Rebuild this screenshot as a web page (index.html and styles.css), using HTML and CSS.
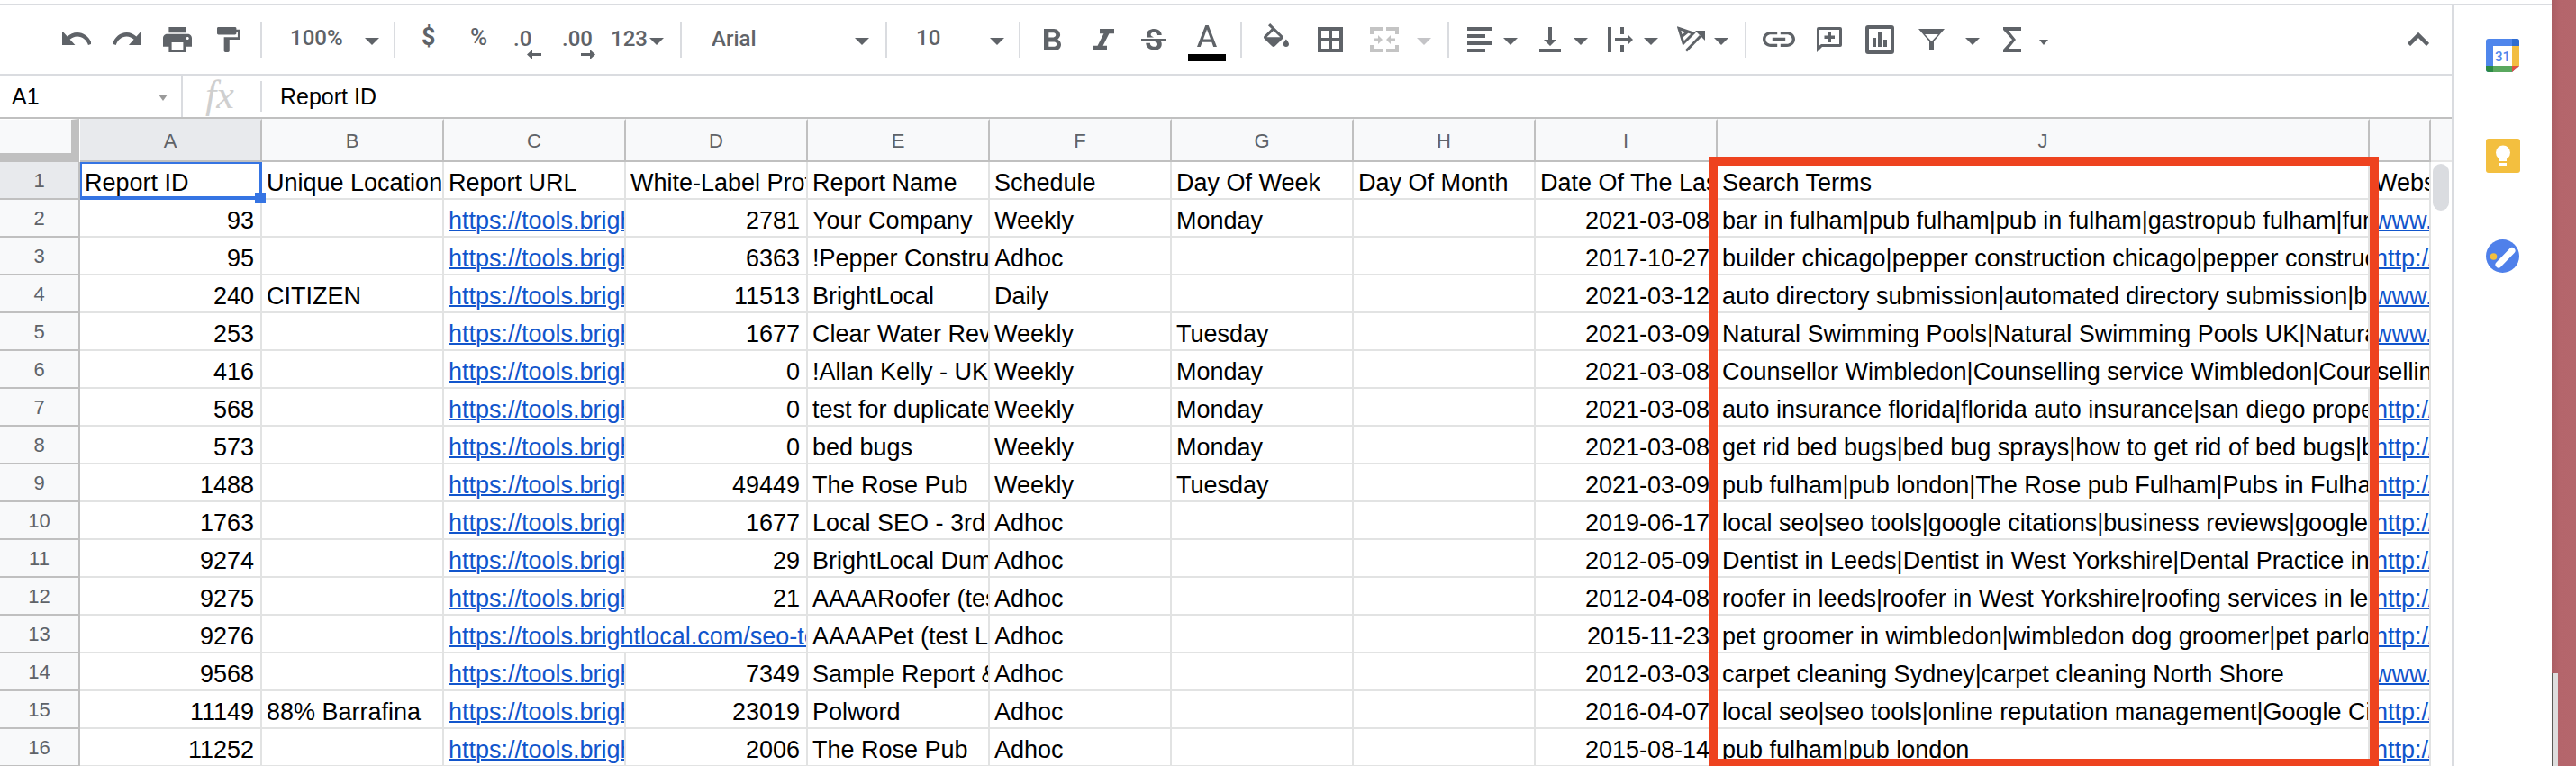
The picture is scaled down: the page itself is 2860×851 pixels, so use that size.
FILE: index.html
```html
<!DOCTYPE html>
<html lang="en">
<head>
<meta charset="utf-8">
<title>Report sheet</title>
<link rel="stylesheet" href="styles.css">
</head>
<body>
<div class="app">
  <div class="topline"></div>
  <div class="work">
    <main class="sheet">
      <div class="toolbar">
        <div class="group g1">
          <svg class="ico undo" viewBox="2 8 20 8" preserveAspectRatio="none"><path d="M12.5 8c-2.65 0-5.05.99-6.9 2.6L2 7v9h9l-3.62-3.62c1.39-1.16 3.16-1.88 5.12-1.88 3.54 0 6.55 2.31 7.6 5.5l2.37-.78C21.08 11.03 17.15 8 12.5 8z"/></svg>
          <svg class="ico redo" viewBox="1.5 8 20.5 8" preserveAspectRatio="none"><path d="M18.4 10.6C16.55 8.99 14.15 8 11.5 8c-4.65 0-8.58 3.03-9.96 7.22L3.9 16c1.05-3.19 4.05-5.5 7.6-5.5 1.95 0 3.73.72 5.12 1.88L13 16h9V7l-3.6 3.6z"/></svg>
          <svg class="ico print" viewBox="2 3 20 18" preserveAspectRatio="none"><path d="M19 8H5c-1.66 0-3 1.34-3 3v6h4v4h12v-4h4v-6c0-1.66-1.34-3-3-3zm-3 11H8v-5h8v5zm3-7c-.55 0-1-.45-1-1s.45-1 1-1 1 .45 1 1-.45 1-1 1zm-1-9H6v4h12V3z"/></svg>
          <svg class="ico paint" viewBox="4 2 17 20" preserveAspectRatio="none"><path d="M18 4V3c0-.55-.45-1-1-1H5c-.55 0-1 .45-1 1v4c0 .55.45 1 1 1h12c.55 0 1-.45 1-1V6h1v4H9v11c0 .55.45 1 1 1h2c.55 0 1-.45 1-1v-9h8V4h-3z"/></svg>
          <span class="sep"></span>
        </div>
        <div class="group g2">
          <span class="txt zoom-t">100%</span><span class="caret"></span>
          <span class="sep"></span>
        </div>
        <div class="group g3">
          <span class="txt dollar">$</span>
          <span class="txt pct">%</span>
          <span class="txt dec dec-less">.0<svg class="arrow" viewBox="0 0 16 11"><path d="M16 4H6V0L0 5.500 6 11V7h10z"/></svg></span>
          <span class="txt dec dec-more">.00<svg class="arrow" viewBox="0 0 16 11"><path d="M0 4h10V0l6 5.500L10 11V7H0z"/></svg></span>
          <span class="txt fmt">123</span><span class="caret fmt-caret"></span>
          <span class="sep"></span>
        </div>
        <div class="group g4">
          <span class="txt font-t">Arial</span><span class="caret"></span>
          <span class="sep"></span>
        </div>
        <div class="group g5">
          <span class="txt size-t">10</span><span class="caret"></span>
          <span class="sep"></span>
        </div>
        <div class="group g6">
          <svg class="ico bold" viewBox="7 4 10.750 14" preserveAspectRatio="none"><path d="M15.600 10.790c.97-.67 1.650-1.770 1.650-2.790 0-2.260-1.750-4-4-4H7v14h7.040c2.090 0 3.710-1.700 3.710-3.790 0-1.520-.86-2.820-2.150-3.420zM10 6.500h3c.83 0 1.500.67 1.500 1.500s-.67 1.500-1.500 1.500h-3v-3zm3.500 9H10v-3h3.500c.83 0 1.500.67 1.500 1.500s-.67 1.500-1.500 1.500z"/></svg>
          <svg class="ico italic" viewBox="6 4 12 14" preserveAspectRatio="none"><path d="M10 4v3h2.210l-3.420 8H6v3h8v-3h-2.210l3.420-8H18V4z"/></svg>
          <svg class="ico strike" viewBox="3 3 18 16" preserveAspectRatio="none"><path d="M6.850 7.080C6.850 4.370 9.450 3 12.240 3c1.640 0 3 .49 3.900 1.280.77.65 1.460 1.730 1.460 3.240h-3.010c0-.31-.05-.59-.15-.85-.29-.86-1.200-1.280-2.250-1.280-1.860 0-2.340 1.020-2.340 1.700 0 .48.25.88.74 1.210.38.25.77.48 1.410.7H7.390c-.21-.34-.54-.89-.54-1.920zM21 12v-2H3v2h9.620c1.150.45 1.960.75 1.960 1.970 0 1-.81 1.670-2.280 1.670-1.540 0-2.930-.54-2.930-2.510H6.400c0 .55.08 1.130.24 1.580.81 2.290 3.290 3.300 5.670 3.300 2.270 0 5.300-.89 5.300-4.050 0-.3-.01-1.160-.48-1.960H21z"/></svg>
          <div class="color-a">
            <svg class="ico color-glyph" viewBox="5.500 3 13 14" preserveAspectRatio="none"><path d="M11 3L5.500 17h2.250l1.120-3h6.250l1.120 3h2.250L13 3h-2zm-1.380 9L12 5.670 14.380 12H9.620z"/></svg>
            <span class="color-bar"></span>
          </div>
          <span class="sep"></span>
        </div>
        <div class="group g7">
          <svg class="ico fill" viewBox="3 0 18 17" preserveAspectRatio="none"><path d="M16.560 8.940L7.620 0 6.210 1.410l2.380 2.380-5.150 5.150c-.59.59-.59 1.540 0 2.120l5.500 5.500c.29.29.68.44 1.060.44s.77-.15 1.060-.44l5.500-5.500c.59-.58.59-1.530 0-2.120zM5.210 10L10 5.210 14.790 10H5.210zM19 11.500s-2 2.170-2 3.500c0 1.100.9 2 2 2s2-.9 2-2c0-1.330-2-3.500-2-3.500z"/></svg>
          <svg class="ico borders" viewBox="0 0 28 28"><path fill-rule="evenodd" d="M0 0h28v28H0z M4 4v8h8V4z M16 4v8h8V4z M4 16v8h8v-8z M16 16v8h8v-8z"/></svg>
          <svg class="ico merge off" viewBox="0 0 32 28"><path d="M0 0h14v4H4v4H0z M18 0h14v8h-4V4H18z M0 20h4v4h10v4H0z M28 20h4v8H18v-4h10z M4 12.500h5V9l5 5-5 5v-3.500H4z M28 12.500h-5V9l-5 5 5 5v-3.500h5z"/></svg>
          <span class="caret off merge-caret"></span>
          <span class="sep"></span>
        </div>
        <div class="group g8">
          <svg class="ico align" viewBox="0 0 28 28"><path d="M0 0h28v4H0z M0 8h20v4H0z M0 16h28v4H0z M0 24h20v4H0z"/></svg>
          <span class="caret c-a"></span>
          <svg class="ico valign" viewBox="0 0 24 28"><path d="M0 24h24v4H0z M10 0h4v14h5l-7 7-7-7h5z"/></svg>
          <span class="caret c-b"></span>
          <svg class="ico wrap" viewBox="0 0 28 28"><path d="M0 0h4v28H0z M14 0h4v8h-4z M14 20h4v8h-4z M8 12h14V8l6 6-6 6v-4H8z"/></svg>
          <span class="caret c-a"></span>
          <svg class="ico rotate" viewBox="0 0 31 29"><path class="line" d="M2 2.500 18 8 7 19z M4.500 12 12 6"/><path class="line" d="M10 27.500 26 11"/><path d="M20 5h11v11z"/></svg>
          <span class="caret c-d"></span>
          <span class="sep"></span>
        </div>
        <div class="group g9">
          <svg class="ico link" viewBox="2 7 20 10" preserveAspectRatio="none"><path d="M3.900 12c0-1.710 1.390-3.100 3.100-3.100h4V7H7c-2.760 0-5 2.240-5 5s2.240 5 5 5h4v-1.900H7c-1.710 0-3.100-1.390-3.100-3.100zM8 13h8v-2H8v2zm9-6h-4v1.900h4c1.710 0 3.100 1.390 3.100 3.100s-1.390 3.100-3.100 3.100h-4V17h4c2.760 0 5-2.240 5-5s-2.240-5-5-5z"/></svg>
          <svg class="ico comment" viewBox="0 0 28 28"><path fill-rule="evenodd" d="M2 0h24a2 2 0 0 1 2 2v18a2 2 0 0 1-2 2H6l-6 6V2a2 2 0 0 1 2-2z M3 3v17.500L5 19h20V3z M12.500 5.500h3.500v4h4v3.500h-4v4h-3.500v-4h-4V9.500h4z"/></svg>
          <svg class="ico chart" viewBox="0 0 32 32"><path fill-rule="evenodd" d="M3 0h26a3 3 0 0 1 3 3v26a3 3 0 0 1-3 3H3a3 3 0 0 1-3-3V3a3 3 0 0 1 3-3z M4 4v24h24V4z"/><path d="M8 14h4v10H8z M14 8h4v16h-4z M20 16h4v8h-4z"/></svg>
          <svg class="ico filter" viewBox="0 0 29 24"><path fill-rule="evenodd" d="M0 0h29L17 14v10h-5V14z M7 6l7.500 8L22 6z"/></svg>
          <span class="caret c-f"></span>
          <svg class="ico sigma" viewBox="0 0 20 28"><path d="M20 0H0v3l10 11L0 25v3h20v-4H6l8-10L6 4h14z"/></svg>
          <span class="caret small"></span>
          <svg class="ico collapse" viewBox="0 0 24 15"><path class="line thick" d="M1.500 13.500 12 3l10.500 10.500"/></svg>
        </div>
      </div>

      <div class="formula">
        <div class="namebox"><span class="name-t">A1</span><span class="caret name-caret"></span></div>
        <div class="fx">fx</div>
        <div class="formula-t">Report ID</div>
      </div>

      <div class="table-area">
        <div class="grid">
          <div class="corner"></div>
          <div class="ch on">A</div><div class="ch">B</div><div class="ch">C</div><div class="ch">D</div><div class="ch">E</div><div class="ch">F</div><div class="ch">G</div><div class="ch">H</div><div class="ch">I</div><div class="ch">J</div><div class="ch"></div>

          <div class="rh on">1</div>
          <div class="c sel">Report ID<span class="handle"></span></div><div class="c">Unique Location Name</div><div class="c">Report URL</div><div class="c">White-Label Profile ID</div><div class="c">Report Name</div><div class="c">Schedule</div><div class="c">Day Of Week</div><div class="c">Day Of Month</div><div class="c">Date Of The Last Run</div><div class="c">Search Terms</div><div class="c">Website URL</div>

          <div class="rh">2</div>
          <div class="c n">93</div><div class="c"></div><div class="c"><a class="lnk" href="#">https://tools.brightlocal.com/seo-tools</a></div><div class="c n">2781</div><div class="c">Your Company</div><div class="c">Weekly</div><div class="c">Monday</div><div class="c"></div><div class="c n">2021-03-08</div><div class="c">bar in fulham|pub fulham|pub in fulham|gastropub fulham|fun pubs in fulham</div><div class="c"><a class="lnk" href="#">www.therosepub.co.uk</a></div>

          <div class="rh">3</div>
          <div class="c n">95</div><div class="c"></div><div class="c"><a class="lnk" href="#">https://tools.brightlocal.com/seo-tools</a></div><div class="c n">6363</div><div class="c">!Pepper Construction</div><div class="c">Adhoc</div><div class="c"></div><div class="c"></div><div class="c n">2017-10-27</div><div class="c">builder chicago|pepper construction chicago|pepper construction company</div><div class="c"><a class="lnk" href="#">http://www.pepperconstruction.com</a></div>

          <div class="rh">4</div>
          <div class="c n">240</div><div class="c">CITIZEN</div><div class="c"><a class="lnk" href="#">https://tools.brightlocal.com/seo-tools</a></div><div class="c n">11513</div><div class="c">BrightLocal</div><div class="c">Daily</div><div class="c"></div><div class="c"></div><div class="c n">2021-03-12</div><div class="c">auto directory submission|automated directory submission|best directories</div><div class="c"><a class="lnk" href="#">www.brightlocal.com</a></div>

          <div class="rh">5</div>
          <div class="c n">253</div><div class="c"></div><div class="c"><a class="lnk" href="#">https://tools.brightlocal.com/seo-tools</a></div><div class="c n">1677</div><div class="c">Clear Water Revolution</div><div class="c">Weekly</div><div class="c">Tuesday</div><div class="c"></div><div class="c n">2021-03-09</div><div class="c">Natural Swimming Pools|Natural Swimming Pools UK|Natural Pools</div><div class="c"><a class="lnk" href="#">www.clearwaterrevolution.com</a></div>

          <div class="rh">6</div>
          <div class="c n">416</div><div class="c"></div><div class="c"><a class="lnk" href="#">https://tools.brightlocal.com/seo-tools</a></div><div class="c n">0</div><div class="c">!Allan Kelly - UK</div><div class="c">Weekly</div><div class="c">Monday</div><div class="c"></div><div class="c n">2021-03-08</div><div class="c span2">Counsellor Wimbledon|Counselling service Wimbledon|Counselling</div>

          <div class="rh">7</div>
          <div class="c n">568</div><div class="c"></div><div class="c"><a class="lnk" href="#">https://tools.brightlocal.com/seo-tools</a></div><div class="c n">0</div><div class="c">test for duplicate</div><div class="c">Weekly</div><div class="c">Monday</div><div class="c"></div><div class="c n">2021-03-08</div><div class="c">auto insurance florida|florida auto insurance|san diego property insurance</div><div class="c"><a class="lnk" href="#">http://www.example.com</a></div>

          <div class="rh">8</div>
          <div class="c n">573</div><div class="c"></div><div class="c"><a class="lnk" href="#">https://tools.brightlocal.com/seo-tools</a></div><div class="c n">0</div><div class="c">bed bugs</div><div class="c">Weekly</div><div class="c">Monday</div><div class="c"></div><div class="c n">2021-03-08</div><div class="c">get rid bed bugs|bed bug sprays|how to get rid of bed bugs|bed bug bites</div><div class="c"><a class="lnk" href="#">http://www.bedbugs.com</a></div>

          <div class="rh">9</div>
          <div class="c n">1488</div><div class="c"></div><div class="c"><a class="lnk" href="#">https://tools.brightlocal.com/seo-tools</a></div><div class="c n">49449</div><div class="c">The Rose Pub</div><div class="c">Weekly</div><div class="c">Tuesday</div><div class="c"></div><div class="c n">2021-03-09</div><div class="c">pub fulham|pub london|The Rose pub Fulham|Pubs in Fulham</div><div class="c"><a class="lnk" href="#">http://www.therosepub.co.uk</a></div>

          <div class="rh">10</div>
          <div class="c n">1763</div><div class="c"></div><div class="c"><a class="lnk" href="#">https://tools.brightlocal.com/seo-tools</a></div><div class="c n">1677</div><div class="c">Local SEO - 3rd party</div><div class="c">Adhoc</div><div class="c"></div><div class="c"></div><div class="c n">2019-06-17</div><div class="c">local seo|seo tools|google citations|business reviews|google places</div><div class="c"><a class="lnk" href="#">http://www.brightlocal.com</a></div>

          <div class="rh">11</div>
          <div class="c n">9274</div><div class="c"></div><div class="c"><a class="lnk" href="#">https://tools.brightlocal.com/seo-tools</a></div><div class="c n">29</div><div class="c">BrightLocal Dummy</div><div class="c">Adhoc</div><div class="c"></div><div class="c"></div><div class="c n">2012-05-09</div><div class="c">Dentist in Leeds|Dentist in West Yorkshire|Dental Practice in</div><div class="c"><a class="lnk" href="#">http://www.leedsdentist.com</a></div>

          <div class="rh">12</div>
          <div class="c n">9275</div><div class="c"></div><div class="c"><a class="lnk" href="#">https://tools.brightlocal.com/seo-tools</a></div><div class="c n">21</div><div class="c">AAAARoofer (test)</div><div class="c">Adhoc</div><div class="c"></div><div class="c"></div><div class="c n">2012-04-08</div><div class="c">roofer in leeds|roofer in West Yorkshire|roofing services in leeds</div><div class="c"><a class="lnk" href="#">http://www.leedsroofer.com</a></div>

          <div class="rh">13</div>
          <div class="c n">9276</div><div class="c"></div><div class="c span2"><a class="lnk" href="#">https://tools.brightlocal.com/seo-tools/admin</a></div><div class="c">AAAAPet (test Location)</div><div class="c">Adhoc</div><div class="c"></div><div class="c"></div><div class="c n">2015-11-23</div><div class="c">pet groomer in wimbledon|wimbledon dog groomer|pet parlor in wimbledon</div><div class="c"><a class="lnk" href="#">http://www.petgroomer.com</a></div>

          <div class="rh">14</div>
          <div class="c n">9568</div><div class="c"></div><div class="c"><a class="lnk" href="#">https://tools.brightlocal.com/seo-tools</a></div><div class="c n">7349</div><div class="c">Sample Report &amp; More</div><div class="c">Adhoc</div><div class="c"></div><div class="c"></div><div class="c n">2012-03-03</div><div class="c">carpet cleaning Sydney|carpet cleaning North Shore</div><div class="c"><a class="lnk" href="#">www.carpetcleaning.com.au</a></div>

          <div class="rh">15</div>
          <div class="c n">11149</div><div class="c">88% Barrafina</div><div class="c"><a class="lnk" href="#">https://tools.brightlocal.com/seo-tools</a></div><div class="c n">23019</div><div class="c">Polword</div><div class="c">Adhoc</div><div class="c"></div><div class="c"></div><div class="c n">2016-04-07</div><div class="c">local seo|seo tools|online reputation management|Google Citations</div><div class="c"><a class="lnk" href="#">http://www.polword.com</a></div>

          <div class="rh">16</div>
          <div class="c n">11252</div><div class="c"></div><div class="c"><a class="lnk" href="#">https://tools.brightlocal.com/seo-tools</a></div><div class="c n">2006</div><div class="c">The Rose Pub</div><div class="c">Adhoc</div><div class="c"></div><div class="c"></div><div class="c n">2015-08-14</div><div class="c">pub fulham|pub london</div><div class="c"><a class="lnk" href="#">http://www.therosepub.co.uk</a></div>
        </div>
        <div class="scroll">
          <div class="scroll-head"></div>
          <div class="thumb"></div>
        </div>
      </div>
    </main>

    <aside class="side">
      <svg class="app-ico cal" viewBox="0 0 37 37">
        <rect width="37" height="37" rx="3" fill="#4f86ec"/>
        <path fill="#2f6cd0" d="M29 0h5a3 3 0 0 1 3 3v5h-8z"/>
        <path fill="#f2bd42" d="M29 8h8v22h-8z"/>
        <path fill="#5aa85f" d="M8 30h21v7H8z"/>
        <path fill="#2c8a45" d="M0 30h8v7H3a3 3 0 0 1-3-3z"/>
        <path fill="#fff" d="M29 37h8v-7z"/>
        <path fill="#e2503f" d="M29 30h8l-8 7z"/>
        <rect x="8" y="8" width="21" height="22" fill="#fff"/>
        <text class="cal-t" x="18.500" y="25">31</text>
      </svg>
      <svg class="app-ico keep" viewBox="0 0 38 38">
        <rect width="38" height="38" rx="3" fill="#f3bf3f"/>
        <circle cx="19" cy="15.500" r="8" fill="#fff"/>
        <path fill="#fff" d="M15 20h8v5h-8z M15 27h8v3h-8z"/>
      </svg>
      <svg class="app-ico tasks" viewBox="0 0 37 37">
        <circle cx="18.500" cy="18.500" r="18.500" fill="#4f80ea"/>
        <path d="M14 28 29 12.500" stroke="#fff" stroke-width="7" stroke-linecap="round"/>
        <circle cx="8.500" cy="19" r="3.800" fill="#f3bf3f"/>
      </svg>
    </aside>
  </div>
</div>
<div class="strip"><div class="peek"></div></div>
<div class="annotation"></div>
</body>
</html>
```
FILE: styles.css
```css
* { box-sizing: border-box; }
html, body { margin: 0; height: 851px; overflow: hidden; }
body { position: relative; display: flex; background: #fff; font-family: "Liberation Sans", Arial, sans-serif; color: #000; }

.app { width: 2833px; flex: none; display: flex; flex-direction: column; }
.topline { height: 6px; border-bottom: 2px solid #dadce0; flex: none; }
.work { display: flex; flex: 1; min-height: 0; }
.sheet { width: 2724px; flex: none; border-right: 2px solid #dadce0; display: flex; flex-direction: column; min-height: 0; }

/* Toolbar */
.toolbar { height: 78px; flex: none; display: flex; border-bottom: 2px solid #dadce0; }
.group { display: flex; align-items: flex-start; flex: none; }
.g1 { width: 291px; } .g2 { width: 148px; } .g3 { width: 318px; } .g4 { width: 228px; }
.g5 { width: 148px; } .g6 { width: 246px; } .g7 { width: 230px; } .g8 { width: 330px; }
.g9 { flex: 1; }
.sep { width: 2px; height: 40px; margin: 18px 0 0 auto; background: #dadce0; flex: none; }
.ico { fill: #5f6368; display: block; flex: none; }
.ico .line { fill: none; stroke: #5f6368; stroke-width: 3; }
.ico .thick { stroke-width: 4.500; }
.caret { flex: none; width: 0; height: 0; margin-top: 36px; border-left: 8px solid transparent; border-right: 8px solid transparent; border-top: 8px solid #5f6368; }
.caret.off { border-top-color: #c4c4c7; }
.ico.off { fill: #c4c4c4; }
.txt { flex: none; font: 500 24px/24px Roboto, sans-serif; color: #5f6368; white-space: nowrap; margin-top: 24px; }

.undo { width: 32px; height: 14px; margin: 30px 0 0 69px; }
.redo { width: 32px; height: 14px; margin: 30px 0 0 24px; }
.print { width: 32px; height: 28px; margin: 24px 0 0 24px; }
.paint { width: 26px; height: 28px; margin: 24px 0 0 28px; }

.zoom-t { width: 83px; margin-left: 31px; }
.dollar { width: 13px; margin: 23px 0 0 29px; font-size: 27px; font-weight: 700; }
.pct { width: 18px; margin: 23px 0 0 41px; font-size: 26px; }
.dec { position: relative; margin-top: 25px; }
.dec-less { width: 20px; margin-left: 30px; }
.dec-more { width: 34px; margin-left: 34px; }
.arrow { position: absolute; width: 16px; height: 11px; top: 24px; fill: #5f6368; }
.dec-less .arrow { left: 15px; }
.dec-more .arrow { left: 21px; }
.fmt { width: 39px; margin: 25px 0 0 20px; }
.fmt-caret { margin-left: 4px; }
.font-t { width: 159px; margin: 25px 0 0 33px; }
.size-t { width: 82px; margin-left: 32px; }

.bold { width: 19px; height: 24px; margin: 26px 0 0 26px; }
.italic { width: 24px; height: 24px; margin: 26px 0 0 35px; }
.strike { width: 28px; height: 25px; margin: 26px 0 0 30px; }
.color-a { width: 42px; margin: 22px 0 0 24px; display: flex; flex-direction: column; align-items: center; }
.color-glyph { width: 22px; height: 24px; }
.color-bar { width: 42px; height: 8px; margin-top: 8px; background: #000; }

.fill { width: 28px; height: 26px; margin: 20px 0 0 24px; }
.borders { width: 28px; height: 28px; margin: 24px 0 0 32px; }
.merge { width: 32px; height: 28px; margin: 24px 0 0 30px; }
.merge-caret { margin-left: 20px; }

.align { width: 28px; height: 28px; margin: 24px 0 0 20px; }
.c-a { margin-left: 12px; }
.valign { width: 24px; height: 28px; margin: 24px 0 0 24px; }
.c-b { margin-left: 14px; }
.wrap { width: 28px; height: 28px; margin: 24px 0 0 22px; }
.rotate { width: 31px; height: 29px; margin: 23px 0 0 21px; }
.c-d { margin-left: 10px; }

.link { width: 36px; height: 17px; margin: 29px 0 0 18px; }
.comment { width: 28px; height: 28px; margin: 24px 0 0 24px; }
.chart { width: 32px; height: 32px; margin: 22px 0 0 26px; }
.filter { width: 29px; height: 24px; margin: 26px 0 0 27px; }
.c-f { margin-left: 23px; }
.sigma { width: 20px; height: 28px; margin: 24px 0 0 26px; }
.caret.small { margin: 38px 0 0 20px; border-left-width: 5px; border-right-width: 5px; border-top-width: 6px; }
.collapse { width: 24px; height: 15px; margin: 30px 25px 0 auto; }

/* Formula bar */
.formula { height: 48px; flex: none; display: flex; border-bottom: 2px solid #c0c0c0; }
.namebox { width: 203px; flex: none; display: flex; align-items: flex-start; border-right: 2px solid #dadce0; padding-left: 13px; }
.name-t { font-size: 25px; line-height: 30px; margin-top: 8px; width: 163px; }
.name-caret { margin-top: 21px; border-left-width: 5.500px; border-right-width: 5.500px; border-top-width: 7px; border-top-color: #9a9a9a; }
.fx { width: 88px; height: 34px; flex: none; margin-top: 6px; border-right: 2px solid #dadce0; font: italic 44px/32px "Liberation Serif", serif; color: #cfcfcf; padding-left: 25px; }
.formula-t { font-size: 25px; line-height: 30px; margin: 8px 0 0 20px; }

/* Grid */
.table-area { flex: 1; min-height: 0; display: flex; overflow: hidden; }
.grid { width: 2699px; flex: none; display: grid; grid-template-columns: 89px repeat(9, 202px) 724px 68px; grid-template-rows: 48px; grid-auto-rows: 42px; }
.corner { width: 88px; background: #f8f9fa; border-right: 9px solid #c0c0c0; border-bottom: 10px solid #c0c0c0; border-top: 1px solid #fff; }
.ch { background: #f8f9fa; color: #5f6368; font-size: 22px; line-height: 26px; padding-top: 10px; text-align: center; border-top: 2px solid #f8f9fa; border-right: 2px solid #c0c0c0; border-bottom: 2px solid #c0c0c0; }
.rh { background: #f8f9fa; color: #5f6368; font-size: 22px; line-height: 26px; padding-top: 8px; text-align: center; border-right: 2px solid #c0c0c0; border-bottom: 2px solid #c0c0c0; }
.on { background: #e8eaed; }
.ch.on { border-top-color: #e8eaed; }
.c { position: relative; font-size: 27px; line-height: 30px; padding: 8px 7px 0 5px; white-space: nowrap; overflow: hidden; border-right: 2px solid #e2e3e3; border-bottom: 2px solid #e2e3e3; }
.n { text-align: right; }
.span2 { grid-column: span 2; }
.lnk { color: #1155cc; text-decoration: underline; text-decoration-thickness: 2px; }
.sel { overflow: visible; z-index: 2; border: solid #3574e3; border-width: 2px 4px 4px 2px; padding: 6px 5px 0 3px; }
.handle { position: absolute; right: -8px; bottom: -8px; width: 12px; height: 12px; background: #3574e3; }

/* Scroll bar */
.scroll { flex: 1; position: relative; }
.scroll-head { height: 48px; background: #f8f9fa; border-bottom: 2px solid #e6e6e6; }
.thumb { width: 18px; height: 52px; margin: 2px 0 0 2px; border-radius: 9px; background: #dadce0; }

/* Side panel */
.side { flex: 1; display: flex; flex-direction: column; padding: 37px 0 0 36px; gap: 74px; }
.app-ico { display: block; flex: none; }
.cal { width: 37px; height: 37px; }
.keep { width: 38px; height: 38px; }
.tasks { width: 37px; height: 37px; }
.cal-t { font: 500 15px Roboto, sans-serif; fill: #4f86ec; text-anchor: middle; }

/* Desktop sliver */
.strip { flex: 1; position: relative; background: linear-gradient(90deg, #a95d63 0, #b4656b 8px, #b5666c 100%); }
.peek { position: absolute; left: 0; bottom: 0; width: 7px; height: 103px; background: #dedede; border-left: 2px solid #5a5a55; }

/* Red highlight drawn over the sheet */
.annotation { position: absolute; left: 1897px; top: 174px; width: 744px; height: 677px; border: 10px solid #ee431f; border-bottom-width: 8px; pointer-events: none; }
```
